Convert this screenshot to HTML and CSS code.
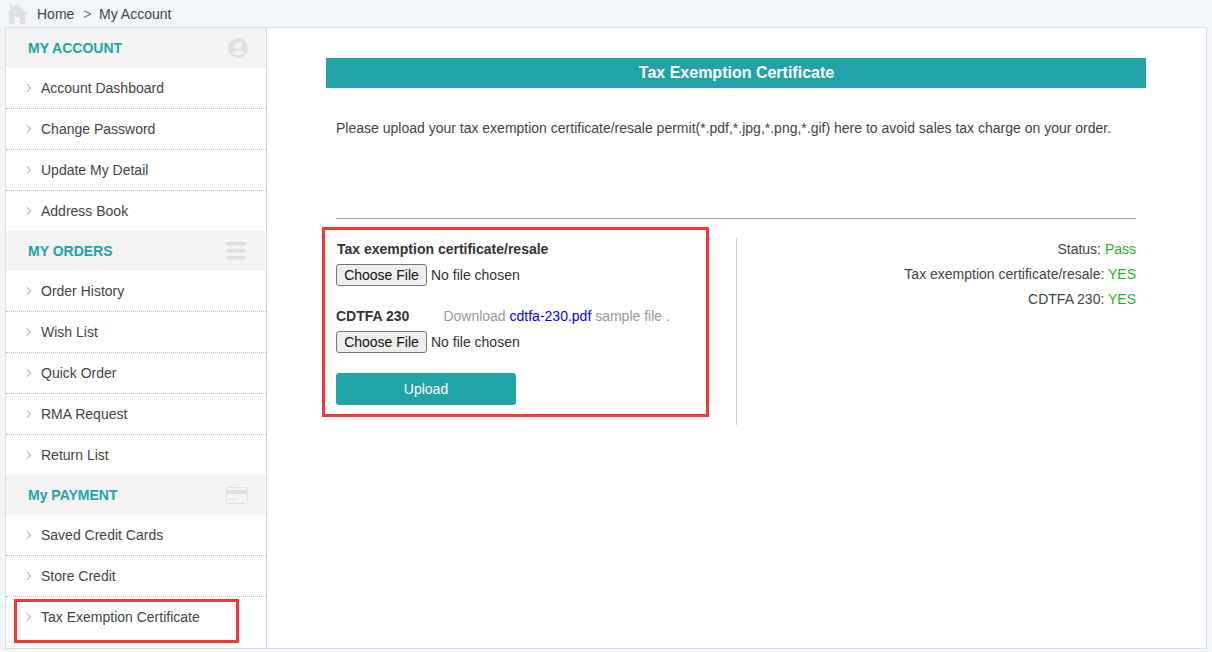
FILE: index.html
```html
<!DOCTYPE html>
<html lang="en">
<head>
<meta charset="utf-8">
<title>Tax Exemption Certificate</title>
<link rel="stylesheet" href="styles.css">
</head>
<body>
<nav class="crumbs">
  <svg class="home" viewBox="0 0 22 20" width="22" height="20"><path d="M11 0 L22 10 L19 10 L19 20 L13.500 20 L13.500 13 L8.500 13 L8.500 20 L3 20 L3 10 L0 10 L4 6.400 L4 1.500 L7 1.500 L7 3.700 Z" fill="#e0e0e0"/></svg>
  <span class="crumb">Home</span><span class="sep">&gt;</span><span class="crumb">My Account</span>
</nav>
<div class="panel">
  <aside class="side">
    <div class="head"><span>MY ACCOUNT</span>
      <svg width="20" height="20" viewBox="0 0 20 20"><circle cx="10" cy="10" r="10" fill="#e0e0e0"/><circle cx="10" cy="7.500" r="3.500" fill="#f4f4f4"/><path d="M3.500 15 C5 11.500 15 11.500 16.500 15 C14 17.500 6 17.500 3.500 15 Z" fill="#f4f4f4"/></svg>
    </div>
    <ul class="menu">
      <li><a>Account Dashboard</a></li>
      <li><a>Change Password</a></li>
      <li><a>Update My Detail</a></li>
      <li class="last"><a>Address Book</a></li>
    </ul>
    <div class="head"><span>MY ORDERS</span>
      <svg class="bars" width="20" height="18" viewBox="0 0 20 18"><path d="M0 0h20v3.500H0zM0 7h20v3.500H0zM0 14h20v3.500H0z" fill="#e0e0e0"/></svg>
    </div>
    <ul class="menu">
      <li><a>Order History</a></li>
      <li><a>Wish List</a></li>
      <li><a>Quick Order</a></li>
      <li><a>RMA Request</a></li>
      <li class="last"><a>Return List</a></li>
    </ul>
    <div class="head"><span>My PAYMENT</span>
      <svg width="22" height="17" viewBox="0 0 22 17"><rect x="0.500" y="0.500" width="21" height="16" rx="2" fill="#f4f4f4" stroke="#e0e0e0"/><rect x="1" y="3" width="20" height="4" fill="#e0e0e0"/><path d="M3 11.500h1.500v2H3zM6 11.500h1.500v2H6zM9 11.500h1.500v2H9z" fill="#e0e0e0"/></svg>
    </div>
    <ul class="menu">
      <li><a>Saved Credit Cards</a></li>
      <li><a>Store Credit</a></li>
      <li class="last"><a>Tax Exemption Certificate</a></li>
    </ul>
    <div class="mark mark-side"></div>
  </aside>
  <main class="main">
    <h1 class="title">Tax Exemption Certificate</h1>
    <p class="intro">Please upload your tax exemption certificate/resale permit(*.pdf,*.jpg,*.png,*.gif) here to avoid sales tax charge on your order.</p>
    <hr class="rule">
    <div class="cols">
      <form class="form">
        <label class="lab lab-first">Tax exemption certificate/resale</label>
        <input class="file" type="file">
        <div class="row2"><label class="lab">CDTFA 230</label><span class="hint">Download <a class="dl">cdtfa-230.pdf</a> sample file .</span></div>
        <input class="file" type="file">
        <button class="upload" type="button">Upload</button>
        <div class="mark mark-form"></div>
      </form>
      <div class="status">
        <p>Status: <b>Pass</b></p>
        <p>Tax exemption certificate/resale: <b>YES</b></p>
        <p>CDTFA 230: <b>YES</b></p>
      </div>
    </div>
  </main>
</div>
</body>
</html>
```

FILE: styles.css
```css
* { box-sizing: border-box; }
html, body { margin: 0; height: 652px; overflow: hidden; }
body { background: #f2f6fa; font-family: "Liberation Sans", Arial, sans-serif; font-size: 14px; color: #333; }
.crumbs { height: 27px; display: flex; align-items: center; padding-left: 6px; color: #444; }
.home { margin-right: 9px; }
.sep { margin: 0 7.500px 0 9px; color: #777; }
.panel { margin-left: 5px; width: 1202px; height: 622px; border: 1px solid #dcdfe2; display: flex; background: #fff; }
.side { width: 261px; flex: none; border-right: 1px solid #d8d8d8; position: relative; }
.head { height: 40px; background: #f4f4f4; display: flex; align-items: center; justify-content: space-between; padding: 0 18px 0 22px; color: #22a3a8; font-weight: bold; }
.bars { margin-right: 2px; }
.menu { list-style: none; margin: 0; padding: 0; }
.menu li { height: 41px; border-bottom: 1px dotted #bbb; display: flex; align-items: center; padding-left: 35px; position: relative; color: #444; }
.menu li.last { border-bottom: 0; height: 40px; }
.menu li::before { content: ""; position: absolute; left: 18px; top: 17px; width: 5px; height: 5px; border-top: 1px solid #bbb; border-right: 1px solid #bbb; transform: rotate(45deg); }
.mark { position: absolute; border: 3px solid #f93636; pointer-events: none; }
.mark-side { left: 8px; top: 571px; width: 225px; height: 44px; }
.main { flex: 1; padding: 30px 60px 0 59px; }
.title { margin: 0; height: 30px; line-height: 29px; padding-left: 1px; background: #22a3a8; color: #fff; font-size: 16px; font-weight: bold; text-align: center; }
.intro { margin: 32px 10px 0; line-height: 16px; color: #444; }
.rule { margin: 82px 10px 0; border: 0; border-top: 1px solid #999; }
.cols { display: flex; margin: 19px 10px 0; }
.form { width: 401px; height: 187px; border-right: 1px solid #ccc; position: relative; display: flex; flex-direction: column; align-items: flex-start; }
.lab { font-weight: bold; color: #333; }
.lab-first { margin: 3px 0 0 1px; line-height: 16px; }
.file { font: 14px "Liberation Sans", Arial, sans-serif; color: #333; margin-top: 7px; height: 22px; }
.file::file-selector-button { font: 14px "Liberation Sans", Arial, sans-serif; height: 22px; width: 91px; margin-right: 4px; padding: 0; border: 1px solid #767676; border-radius: 3px; background: #efefef; color: #111; }
.row2 { margin-top: 22px; line-height: 16px; display: flex; }
.hint { margin-left: 34px; color: #999; }
.dl { color: #00f; }
.file + .row2 + .file { margin-top: 7px; }
.upload { margin-top: 20px; width: 180px; height: 32px; border: 0; border-radius: 3px; background: #22a3a8; color: #fff; font: 14px "Liberation Sans", Arial, sans-serif; padding: 0; }
.mark-form { left: -14px; top: -11px; width: 387px; height: 190px; }
.status { flex: 1; text-align: right; color: #444; padding-top: 3px; }
.status p { margin: 0 0 9px; line-height: 16px; }
.status b { font-weight: normal; color: #1fb41f; }
```
